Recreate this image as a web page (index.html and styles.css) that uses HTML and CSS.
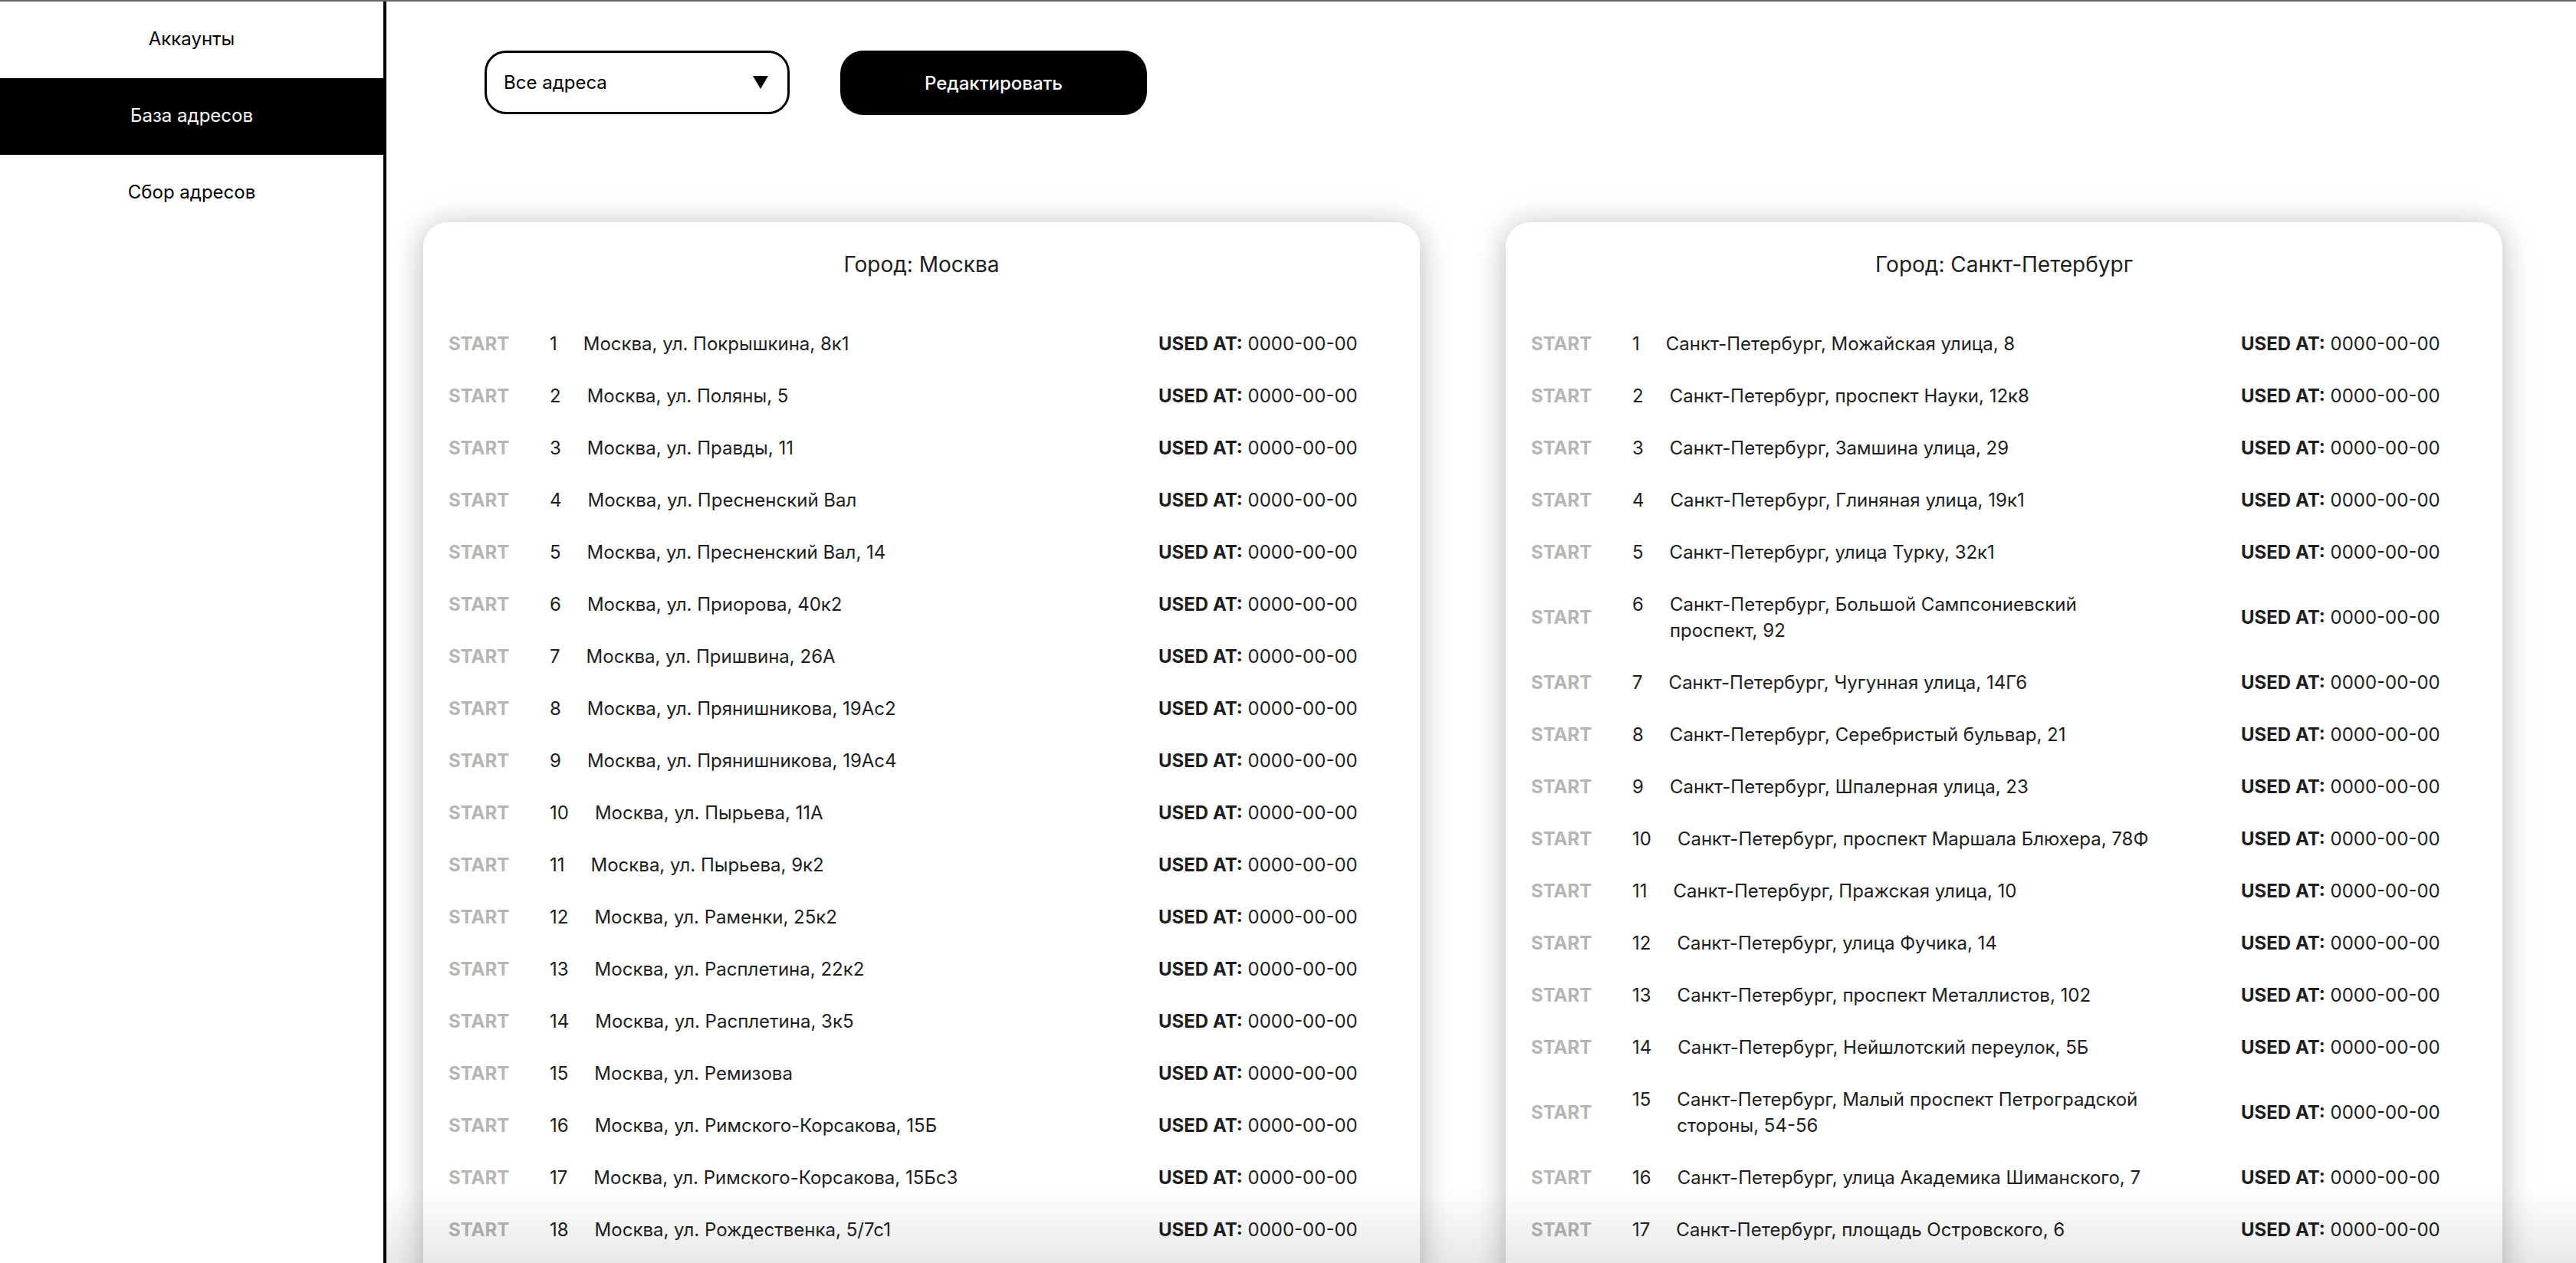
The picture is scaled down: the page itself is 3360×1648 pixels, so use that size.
FILE: index.html
```html
<!DOCTYPE html>
<html lang="ru">
<head>
<meta charset="utf-8">
<title>База адресов</title>
<link rel="stylesheet" href="styles.css">
</head>
<body>
<div class="app">
  <aside class="sidebar">
    <a class="nav-item">Аккаунты</a>
    <a class="nav-item active">База адресов</a>
    <a class="nav-item">Сбор адресов</a>
  </aside>
  <main class="main">
    <div class="toolbar">
      <div class="select">
        <span>Все адреса</span>
        <svg class="caret" width="20" height="17" viewBox="0 0 20 17"><path d="M0 0H20L10 17Z" fill="#000"/></svg>
      </div>
      <button class="btn">Редактировать</button>
    </div>
    <div class="cards">
      <section class="card">
        <h2 class="card-title">Город: Москва</h2>
        <div class="rows">
          <div class="row"><span class="start">START</span><div class="cell"><span class="num">1</span><span class="addr">Москва, ул. Покрышкина, 8к1</span></div><span class="used"><b>USED AT:</b> 0000-00-00</span></div>
          <div class="row"><span class="start">START</span><div class="cell"><span class="num">2</span><span class="addr">Москва, ул. Поляны, 5</span></div><span class="used"><b>USED AT:</b> 0000-00-00</span></div>
          <div class="row"><span class="start">START</span><div class="cell"><span class="num">3</span><span class="addr">Москва, ул. Правды, 11</span></div><span class="used"><b>USED AT:</b> 0000-00-00</span></div>
          <div class="row"><span class="start">START</span><div class="cell"><span class="num">4</span><span class="addr">Москва, ул. Пресненский Вал</span></div><span class="used"><b>USED AT:</b> 0000-00-00</span></div>
          <div class="row"><span class="start">START</span><div class="cell"><span class="num">5</span><span class="addr">Москва, ул. Пресненский Вал, 14</span></div><span class="used"><b>USED AT:</b> 0000-00-00</span></div>
          <div class="row"><span class="start">START</span><div class="cell"><span class="num">6</span><span class="addr">Москва, ул. Приорова, 40к2</span></div><span class="used"><b>USED AT:</b> 0000-00-00</span></div>
          <div class="row"><span class="start">START</span><div class="cell"><span class="num">7</span><span class="addr">Москва, ул. Пришвина, 26А</span></div><span class="used"><b>USED AT:</b> 0000-00-00</span></div>
          <div class="row"><span class="start">START</span><div class="cell"><span class="num">8</span><span class="addr">Москва, ул. Прянишникова, 19Ас2</span></div><span class="used"><b>USED AT:</b> 0000-00-00</span></div>
          <div class="row"><span class="start">START</span><div class="cell"><span class="num">9</span><span class="addr">Москва, ул. Прянишникова, 19Ас4</span></div><span class="used"><b>USED AT:</b> 0000-00-00</span></div>
          <div class="row"><span class="start">START</span><div class="cell"><span class="num">10</span><span class="addr">Москва, ул. Пырьева, 11А</span></div><span class="used"><b>USED AT:</b> 0000-00-00</span></div>
          <div class="row"><span class="start">START</span><div class="cell"><span class="num">11</span><span class="addr">Москва, ул. Пырьева, 9к2</span></div><span class="used"><b>USED AT:</b> 0000-00-00</span></div>
          <div class="row"><span class="start">START</span><div class="cell"><span class="num">12</span><span class="addr">Москва, ул. Раменки, 25к2</span></div><span class="used"><b>USED AT:</b> 0000-00-00</span></div>
          <div class="row"><span class="start">START</span><div class="cell"><span class="num">13</span><span class="addr">Москва, ул. Расплетина, 22к2</span></div><span class="used"><b>USED AT:</b> 0000-00-00</span></div>
          <div class="row"><span class="start">START</span><div class="cell"><span class="num">14</span><span class="addr">Москва, ул. Расплетина, 3к5</span></div><span class="used"><b>USED AT:</b> 0000-00-00</span></div>
          <div class="row"><span class="start">START</span><div class="cell"><span class="num">15</span><span class="addr">Москва, ул. Ремизова</span></div><span class="used"><b>USED AT:</b> 0000-00-00</span></div>
          <div class="row"><span class="start">START</span><div class="cell"><span class="num">16</span><span class="addr">Москва, ул. Римского-Корсакова, 15Б</span></div><span class="used"><b>USED AT:</b> 0000-00-00</span></div>
          <div class="row"><span class="start">START</span><div class="cell"><span class="num">17</span><span class="addr">Москва, ул. Римского-Корсакова, 15Бс3</span></div><span class="used"><b>USED AT:</b> 0000-00-00</span></div>
          <div class="row"><span class="start">START</span><div class="cell"><span class="num">18</span><span class="addr">Москва, ул. Рождественка, 5/7с1</span></div><span class="used"><b>USED AT:</b> 0000-00-00</span></div>
        </div>
      </section>
      <section class="card">
        <h2 class="card-title">Город: Санкт-Петербург</h2>
        <div class="rows">
          <div class="row"><span class="start">START</span><div class="cell"><span class="num">1</span><span class="addr">Санкт-Петербург, Можайская улица, 8</span></div><span class="used"><b>USED AT:</b> 0000-00-00</span></div>
          <div class="row"><span class="start">START</span><div class="cell"><span class="num">2</span><span class="addr">Санкт-Петербург, проспект Науки, 12к8</span></div><span class="used"><b>USED AT:</b> 0000-00-00</span></div>
          <div class="row"><span class="start">START</span><div class="cell"><span class="num">3</span><span class="addr">Санкт-Петербург, Замшина улица, 29</span></div><span class="used"><b>USED AT:</b> 0000-00-00</span></div>
          <div class="row"><span class="start">START</span><div class="cell"><span class="num">4</span><span class="addr">Санкт-Петербург, Глиняная улица, 19к1</span></div><span class="used"><b>USED AT:</b> 0000-00-00</span></div>
          <div class="row"><span class="start">START</span><div class="cell"><span class="num">5</span><span class="addr">Санкт-Петербург, улица Турку, 32к1</span></div><span class="used"><b>USED AT:</b> 0000-00-00</span></div>
          <div class="row"><span class="start">START</span><div class="cell"><span class="num">6</span><span class="addr">Санкт-Петербург, Большой Сампсониевский проспект, 92</span></div><span class="used"><b>USED AT:</b> 0000-00-00</span></div>
          <div class="row"><span class="start">START</span><div class="cell"><span class="num">7</span><span class="addr">Санкт-Петербург, Чугунная улица, 14Г6</span></div><span class="used"><b>USED AT:</b> 0000-00-00</span></div>
          <div class="row"><span class="start">START</span><div class="cell"><span class="num">8</span><span class="addr">Санкт-Петербург, Серебристый бульвар, 21</span></div><span class="used"><b>USED AT:</b> 0000-00-00</span></div>
          <div class="row"><span class="start">START</span><div class="cell"><span class="num">9</span><span class="addr">Санкт-Петербург, Шпалерная улица, 23</span></div><span class="used"><b>USED AT:</b> 0000-00-00</span></div>
          <div class="row"><span class="start">START</span><div class="cell"><span class="num">10</span><span class="addr">Санкт-Петербург, проспект Маршала Блюхера, 78Ф</span></div><span class="used"><b>USED AT:</b> 0000-00-00</span></div>
          <div class="row"><span class="start">START</span><div class="cell"><span class="num">11</span><span class="addr">Санкт-Петербург, Пражская улица, 10</span></div><span class="used"><b>USED AT:</b> 0000-00-00</span></div>
          <div class="row"><span class="start">START</span><div class="cell"><span class="num">12</span><span class="addr">Санкт-Петербург, улица Фучика, 14</span></div><span class="used"><b>USED AT:</b> 0000-00-00</span></div>
          <div class="row"><span class="start">START</span><div class="cell"><span class="num">13</span><span class="addr">Санкт-Петербург, проспект Металлистов, 102</span></div><span class="used"><b>USED AT:</b> 0000-00-00</span></div>
          <div class="row"><span class="start">START</span><div class="cell"><span class="num">14</span><span class="addr">Санкт-Петербург, Нейшлотский переулок, 5Б</span></div><span class="used"><b>USED AT:</b> 0000-00-00</span></div>
          <div class="row"><span class="start">START</span><div class="cell"><span class="num">15</span><span class="addr">Санкт-Петербург, Малый проспект Петроградской стороны, 54-56</span></div><span class="used"><b>USED AT:</b> 0000-00-00</span></div>
          <div class="row"><span class="start">START</span><div class="cell"><span class="num">16</span><span class="addr">Санкт-Петербург, улица Академика Шиманского, 7</span></div><span class="used"><b>USED AT:</b> 0000-00-00</span></div>
          <div class="row"><span class="start">START</span><div class="cell"><span class="num">17</span><span class="addr">Санкт-Петербург, площадь Островского, 6</span></div><span class="used"><b>USED AT:</b> 0000-00-00</span></div>
        </div>
      </section>
    </div>
    <div class="fade"></div>
  </main>
</div>
</body>
</html>
```

FILE: styles.css
```css
* { box-sizing: border-box; }

html, body {
  margin: 0;
  padding: 0;
  height: 100%;
  overflow: hidden;
}

body {
  font-family: Inter, "Noto Sans", "Liberation Sans", sans-serif;
  color: #1d1d1f;
  background: #fff;
  border-top: 2px solid #666;
}

.app {
  display: flex;
  height: calc(100vh - 2px);
}

.sidebar {
  flex: 0 0 504px;
  border-right: 4px solid #000;
  display: flex;
  flex-direction: column;
}

.nav-item {
  height: 100px;
  display: flex;
  align-items: center;
  justify-content: center;
  padding-bottom: 3px;
  font-size: 24px;
  color: #000;
  cursor: pointer;
}

.nav-item.active {
  background: #000;
  color: #fff;
}

.main {
  flex: 1;
  position: relative;
  overflow: hidden;
}

.toolbar {
  display: flex;
  gap: 66px;
  padding: 64px 0 0 128px;
}

.select {
  width: 398px;
  height: 83px;
  border: 3px solid #000;
  border-radius: 28px;
  display: flex;
  align-items: center;
  justify-content: space-between;
  padding: 0 25px 0 22px;
  font-size: 24px;
  color: #000;
}

.caret { display: block; }

.btn {
  width: 400px;
  height: 84px;
  border: 0;
  border-radius: 30px;
  background: #000;
  color: #fff;
  font-family: inherit;
  font-size: 24px;
  font-weight: 500;
}

.cards {
  display: grid;
  grid-template-columns: 1300px 1300px;
  column-gap: 112px;
  padding: 140px 0 0 48px;
  align-items: start;
}

.card {
  background: #fff;
  border-radius: 32px;
  box-shadow: 0 4px 40px rgba(0, 0, 0, 0.28);
  padding: 38px 0 60px;
}

.card-title {
  margin: 0 0 53px;
  font-size: 28px;
  font-weight: 400;
  line-height: 34px;
  text-align: center;
  color: #1d1d1f;
}

.row {
  display: grid;
  grid-template-columns: 132px 794px auto;
  align-items: center;
  padding: 17px 0 17px 33px;
  font-size: 24px;
  line-height: 34px;
}

.start {
  font-weight: 700;
  color: #b5b5b5;
}

.cell {
  display: flex;
  align-items: flex-start;
  gap: 34px;
}

.addr { max-width: 640px; }

.used { white-space: nowrap; }
.used b { font-weight: 700; }

.fade {
  position: absolute;
  left: 0;
  right: 0;
  bottom: 0;
  height: 100px;
  background: linear-gradient(to bottom, rgba(0, 0, 0, 0), rgba(0, 0, 0, 0.09));
  pointer-events: none;
}
```
